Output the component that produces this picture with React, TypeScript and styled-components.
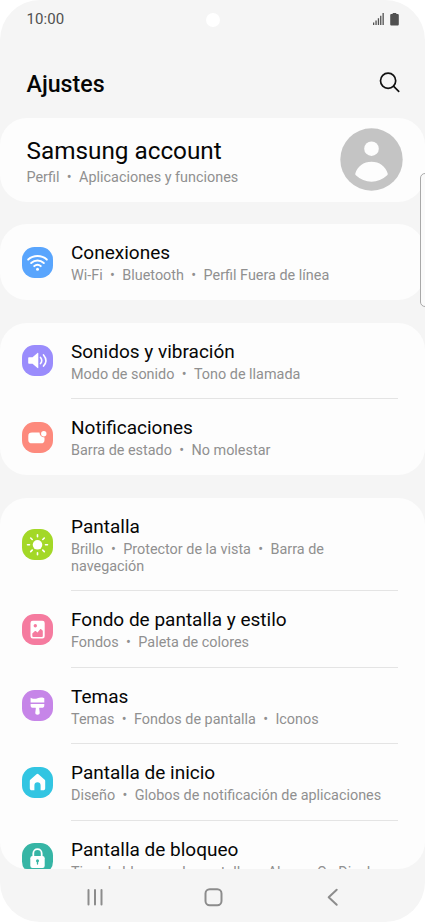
import React from "react";
import styled, { createGlobalStyle } from "styled-components";

const GlobalStyle = createGlobalStyle`
  *, *::before, *::after { box-sizing: border-box; }
  html, body { margin: 0; padding: 0; background: #fff; }
  body { font-family: Roboto, sans-serif; overflow: hidden; }
`;

const Phone = styled.main`
  position: relative;
  display: flex;
  flex-direction: column;
  width: 425px;
  height: 922px;
  border-radius: 40px;
  background: #f5f5f5;
  overflow: hidden;
`;

const StatusBar = styled.div`
  display: grid;
  grid-template-columns: 1fr 14px 1fr;
  align-items: center;
  height: 38px;
  padding: 0 26px 0 26.5px;
  color: #505050;
`;

const Clock = styled.span`
  font-size: 15px;
  line-height: 18px;
  letter-spacing: 0.1px;
`;

const Camera = styled.span`
  width: 14px;
  height: 14px;
  margin-top: 1px;
  border-radius: 50%;
  background: #fff;
`;

const StatusIcons = styled.div`
  display: flex;
  justify-content: flex-end;
  gap: 6px;
`;

const Header = styled.header`
  display: flex;
  align-items: center;
  justify-content: space-between;
  height: 80px;
  padding: 10px 24px 0 26.5px;
`;

const PageTitle = styled.h1`
  margin: 1px 0 0;
  font-size: 23.2px;
  font-weight: 500;
  line-height: 28px;
  color: #060606;
`;

const IconButton = styled.button`
  display: flex;
  padding: 0;
  border: 0;
  background: none;
`;

const Content = styled.div`
  display: flex;
  flex-direction: column;
  gap: 22.5px;
  height: 751px;
  flex: none;
  border-radius: 0 0 27px 27px;
  overflow: hidden;
`;

const Card = styled.section`
  flex: none;
  border-radius: 27px;
  background: #fdfdfd;
`;

const AccountCard = styled(Card)`
  display: flex;
  justify-content: space-between;
  height: 83.5px;
  padding: 10.4px 21.7px 0 26.5px;
`;

const AccountName = styled.h2`
  margin: 8px 0 3px;
  font-size: 24.3px;
  font-weight: 400;
  line-height: 30px;
  color: #060606;
`;

const Row = styled.div<{ $tall?: boolean; $last?: boolean }>`
  display: flex;
  align-items: center;
  height: ${(p) => (p.$tall ? 93.5 : p.$last ? 76 : 76.5)}px;
  padding: 0 27px 0 22px;
`;

const RowBody = styled.div<{ $last?: boolean }>`
  display: flex;
  flex: 1;
  flex-direction: column;
  align-self: stretch;
  gap: 2px;
  margin-left: 18px;
  padding-top: 17px;
  border-bottom: ${(p) => (p.$last ? "none" : "1px solid #e4e4e4")};
`;

const RowTitle = styled.h3`
  margin: 0;
  font-size: 19px;
  font-weight: 400;
  line-height: 24px;
  color: #060606;
`;

const Subtitle = styled.p`
  margin: 0;
  font-size: 14.4px;
  line-height: 17px;
  color: #909090;
`;

const Bullet = styled.span`
  display: inline-block;
  width: 19.6px;
  text-align: center;
`;

const Badge = styled.span<{ $color: string }>`
  display: flex;
  flex: none;
  width: 31px;
  height: 31px;
  border-radius: 12.5px;
  background: ${(p) => p.$color};
`;

const NavBar = styled.nav`
  display: grid;
  grid-template-columns: 24px 24px 24px;
  justify-content: center;
  align-items: center;
  gap: 95px;
  flex: 1;
  padding-top: 2px;
`;

const EdgeHandle = styled.div`
  position: absolute;
  top: 173px;
  right: -6px;
  width: 11px;
  height: 134px;
  border: 1px solid #a8a8a8;
  border-radius: 5px;
  background: #fafafa;
`;

const glyphs = {
  wifi: (
    <g fill="none" stroke="#fff" strokeWidth="2" strokeLinecap="round">
      <path d="M6.200 12.600c5.400-4.700 13.200-4.700 18.600 0M9.200 16c3.700-3.200 8.900-3.200 12.600 0M12.300 19.100c1.900-1.600 4.500-1.600 6.400 0" />
      <circle cx="15.500" cy="22.300" r="1.500" fill="#fff" stroke="none" />
    </g>
  ),
  sound: (
    <g fill="#fff">
      <path d="M7 12.300h3.500l5-4.400c.4-.3.8-.1.8.4v14.400c0 .5-.4.700-.8.400l-5-4.400H7c-.5 0-.8-.3-.8-.8v-4.800c0-.5.3-.8.8-.8z" />
      <path d="M18.500 12.400c1.600 2 1.600 4.200 0 6.200M21.500 9.900c3.100 3.600 3.100 7.600 0 11.200" fill="none" stroke="#fff" strokeWidth="1.600" strokeLinecap="round" />
    </g>
  ),
  notification: (
    <g fill="#fff">
      <path d="M10 10.600h7.500c.1 3 2 4.800 5 4.900v2.400c0 2.200-1.200 3.400-3.400 3.400H10c-2.400 0-3.700-1.200-3.700-3.400v-4c0-2.200 1.300-3.300 3.700-3.300z" />
      <circle cx="21.800" cy="11.800" r="2.700" />
    </g>
  ),
  sun: (
    <g stroke="#fff" strokeWidth="1.600" strokeLinecap="round">
      <circle cx="15.500" cy="15.800" r="4.800" fill="#fff" stroke="none" />
      <path d="M15.500 5.800v2M15.500 23.800v2M5.500 15.800h2M23.500 15.800h2M8.700 9l1.500 1.500M20.800 21.100l1.500 1.500M22.300 9l-1.500 1.500M10.200 21.100l-1.500 1.500" />
    </g>
  ),
  picture: (
    <path
      fill="#fff"
      fillRule="evenodd"
      d="M10.800 6.800h9.600a2.300 2.300 0 0 1 2.300 2.300v13.200a2.300 2.300 0 0 1-2.300 2.300h-9.600a2.300 2.300 0 0 1-2.300-2.300V9.100a2.300 2.300 0 0 1 2.300-2.300zM11.600 11.700a1.700 1.700 0 1 0 3.400 0a1.700 1.700 0 1 0-3.400 0zM10.300 19.500v2.500c0 .6.400.900.900.900h8.700c.6 0 .9-.3.9-.9v-5.300l-1.400-1.300c-.5-.4-1-.4-1.400.1l-2.500 2.900-1.500-1.200c-.5-.4-.9-.3-1.300 0z"
    />
  ),
  brush: (
    <g fill="#fff">
      <path d="M9 7.900c2.700 1.200 4.600 1 6.500.3 2-.9 4.300-1 6.300-.3.400.1.500.3.500.7v3.900H8.600V8.200c0-.3.100-.4.400-.3z" />
      <path d="M8.600 14h13.700v1.400c0 1.500-.9 2.400-2.400 2.400h-2.300c-.4 0-.5.400-.4.800l.5 3.800c.2 1.300-.8 2.300-2.200 2.300s-2.400-1-2.200-2.300l.5-3.800c.1-.4 0-.8-.4-.8H11c-1.500 0-2.400-.9-2.400-2.400z" />
    </g>
  ),
  home: (
    <path
      fill="#fff"
      d="M14.500 7.300a1.500 1.500 0 0 1 2 0l6.200 5.400c.4.400.5.700.5 1.200v7.300c0 1.300-.8 2.100-2.100 2.100h-2.500v-4.900c0-1.900-1.200-3.100-3.100-3.100s-3.100 1.200-3.100 3.100v4.900H9.900c-1.300 0-2.100-.8-2.100-2.100v-7.300c0-.5.100-.8.500-1.200z"
    />
  ),
  lock: (
    <g>
      <path d="M11.300 14v-3.600a4.200 4.200 0 0 1 8.400 0V14" fill="none" stroke="#fff" strokeWidth="1.800" />
      <rect x="8.300" y="13" width="14.400" height="12" rx="2.200" fill="#fff" />
      <path d="M15.500 18v3" stroke="#36b5a5" strokeWidth="1.300" strokeLinecap="round" />
      <circle cx="15.500" cy="17.800" r="1.500" fill="#36b5a5" />
    </g>
  ),
};

type Item = {
  icon: keyof typeof glyphs;
  color: string;
  title: string;
  details: string[];
  tall?: boolean;
};

const groups: Item[][] = [
  [
    { icon: "wifi", color: "#59a5fd", title: "Conexiones", details: ["Wi-Fi", "Bluetooth", "Perfil Fuera de línea"] },
  ],
  [
    { icon: "sound", color: "#9a8cfc", title: "Sonidos y vibración", details: ["Modo de sonido", "Tono de llamada"] },
    { icon: "notification", color: "#fd8a7d", title: "Notificaciones", details: ["Barra de estado", "No molestar"] },
  ],
  [
    { icon: "sun", color: "#a3d827", title: "Pantalla", details: ["Brillo", "Protector de la vista", "Barra de navegación"], tall: true },
    { icon: "picture", color: "#f57b9f", title: "Fondo de pantalla y estilo", details: ["Fondos", "Paleta de colores"] },
    { icon: "brush", color: "#c685e8", title: "Temas", details: ["Temas", "Fondos de pantalla", "Iconos"] },
    { icon: "home", color: "#32c5e2", title: "Pantalla de inicio", details: ["Diseño", "Globos de notificación de aplicaciones"] },
    { icon: "lock", color: "#36b5a5", title: "Pantalla de bloqueo", details: ["Tipo de bloqueo de pantalla", "Always On Display"] },
  ],
];

const Details = ({ parts }: { parts: string[] }) => (
  <Subtitle>
    {parts.map((part, i) => (
      <React.Fragment key={part}>
        {i > 0 && <Bullet>•</Bullet>}
        {part}
      </React.Fragment>
    ))}
  </Subtitle>
);

const SettingsRow = ({ item, last }: { item: Item; last: boolean }) => (
  <Row $tall={item.tall} $last={last}>
    <Badge $color={item.color}>
      <svg width="31" height="31" viewBox="0 0 31 31">
        {glyphs[item.icon]}
      </svg>
    </Badge>
    <RowBody $last={last}>
      <RowTitle>{item.title}</RowTitle>
      <Details parts={item.details} />
    </RowBody>
  </Row>
);

export default function App() {
  return (
    <>
      <GlobalStyle />
      <Phone>
        <StatusBar>
          <Clock>10:00</Clock>
          <Camera />
          <StatusIcons>
            <svg width="11" height="12" viewBox="0 0 11 12" fill="#505050">
              <path d="M0 9.500h1.300V12H0zM2.400 7.500h1.300V12H2.400zM4.800 5.200h1.300V12H4.800zM7.100 2.700h1.300V12H7.100zM9.500 0h1.300v12H9.500z" />
            </svg>
            <svg width="9" height="13" viewBox="0 0 9 13" fill="#505050">
              <path d="M2.500 1c0-.6.300-.9.900-.9h2.200c.6 0 .9.300.9.900h.9c.9 0 1.400.5 1.400 1.400v8.800c0 .9-.5 1.400-1.400 1.400H1.600c-.9 0-1.400-.5-1.400-1.400V2.400C.2 1.500.7 1 1.600 1z" />
            </svg>
          </StatusIcons>
        </StatusBar>
        <Header>
          <PageTitle>Ajustes</PageTitle>
          <IconButton aria-label="Buscar">
            <svg width="22" height="22" viewBox="0 0 22 22" fill="none" stroke="#111" strokeWidth="1.700" strokeLinecap="round">
              <circle cx="9.100" cy="8.700" r="7.600" />
              <path d="M14.700 14.300l5 5" />
            </svg>
          </IconButton>
        </Header>
        <Content>
          <AccountCard>
            <div>
              <AccountName>Samsung account</AccountName>
              <Details parts={["Perfil", "Aplicaciones y funciones"]} />
            </div>
            <svg width="63" height="63" viewBox="0 0 63 63">
              <circle cx="31.500" cy="31.500" r="31.200" fill="#c4c4c4" />
              <circle cx="31.500" cy="20.700" r="7.300" fill="#fdfdfd" />
              <path d="M15.300 45.500C17.300 38.300 23.600 33.700 31.500 33.700s14.200 4.600 16.200 11.800c.2.700 0 1.200-.5 1.700-8.800 8.600-22.600 8.600-31.400 0-.5-.5-.7-1-.5-1.700z" fill="#fdfdfd" />
            </svg>
          </AccountCard>
          {groups.map((items) => (
            <Card key={items[0].title}>
              {items.map((item, i) => (
                <SettingsRow key={item.title} item={item} last={i === items.length - 1} />
              ))}
            </Card>
          ))}
        </Content>
        <NavBar>
          <svg width="24" height="24" viewBox="0 0 24 24" stroke="#8c8c8c" strokeWidth="2" strokeLinecap="round">
            <path d="M6.500 5v14.500M13 5v14.500M19.500 5v14.500" />
          </svg>
          <svg width="24" height="24" viewBox="0 0 24 24" fill="none" stroke="#8c8c8c" strokeWidth="2">
            <rect x="4.500" y="4.300" width="16" height="16" rx="4.200" />
          </svg>
          <svg width="24" height="24" viewBox="0 0 24 24" fill="none" stroke="#8c8c8c" strokeWidth="2" strokeLinecap="round" strokeLinejoin="round">
            <path d="M16.700 4.800l-8 7.500 8 7.500" />
          </svg>
        </NavBar>
        <EdgeHandle />
      </Phone>
    </>
  );
}
